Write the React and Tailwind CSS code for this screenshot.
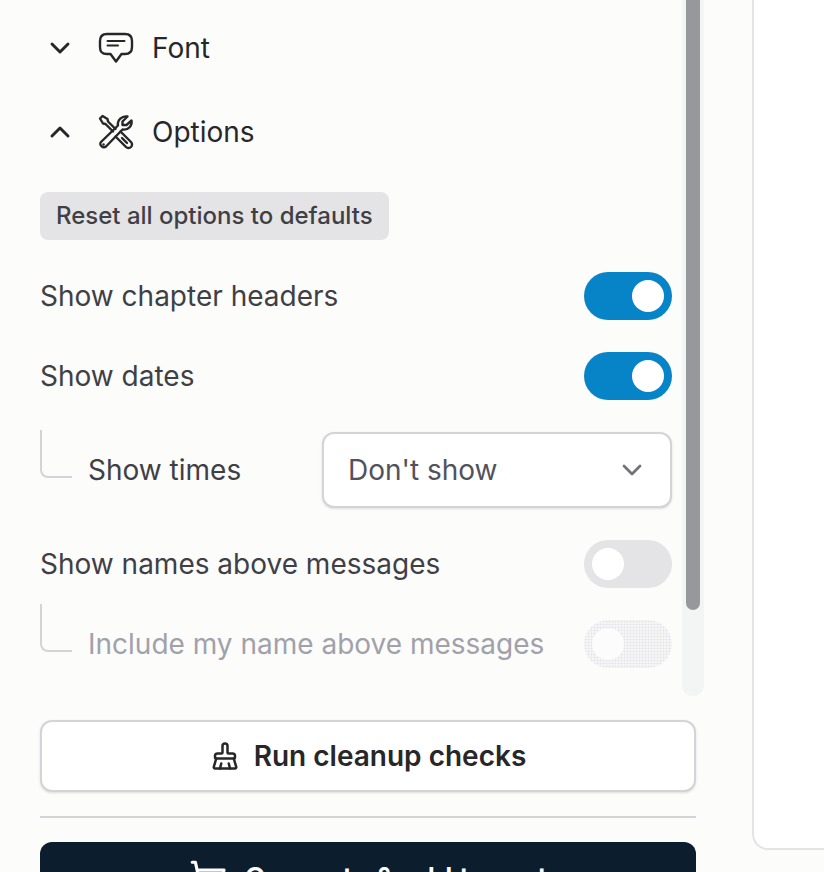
import React from "react";
import { ChevronDown, ChevronUp, BrushCleaning, ShoppingCart } from "lucide-react";

function Bubble() {
  return (
    <svg width="36" height="36" viewBox="0 0 36 36" fill="none" stroke="#27272a" strokeWidth="2.4" strokeLinecap="round" strokeLinejoin="round">
      <path d="M9 4H27C32 4 34 6 34 11V17C34 22 32 24 27 24H23.5L18 31.5L12.5 24H9C4 24 2 22 2 17V11C2 6 4 4 9 4Z" />
      <path d="M9.5 11H26.5" strokeWidth="2" />
      <path d="M9.5 15.5H20" strokeWidth="2" />
    </svg>
  );
}

function Tools() {
  return (
    <svg width="36" height="36" viewBox="0 0 36 36" fill="none" stroke="#27272a" strokeWidth="2.4" strokeLinecap="round" strokeLinejoin="round">
      <path d="M2 4.5L4.5 2L9.5 5L10 7.5L17.5 15M7.5 10L5 9.5L2 4.5M7.5 10L15 17.5" />
      <path d="M22.5 17.5L33 28A3.5 3.5 0 0 1 28 33L17.5 22.5" />
      <path d="M24 24L29 29" />
      <path d="M29.5 2.5L24.5 7.5V11H28.5L33.5 6.5C34.5 11.5 30.5 16.5 24.5 15.5L8 32.5C5 35 0.5 30.5 3 28L20 11.5C19 6 24 1.5 29.5 2.5Z" />
      <path d="M5.5 30.5H5.6" />
    </svg>
  );
}

function Section({ open, icon, label }) {
  const Chevron = open ? ChevronUp : ChevronDown;
  return (
    <div className="flex h-12 items-center text-[#27272a]">
      <div className="flex w-[58px] justify-start pl-[4px]">
        <Chevron size={32} strokeWidth={2.2} />
      </div>
      <div className="flex w-[54px]">{icon}</div>
      <span className="text-[28px]">{label}</span>
    </div>
  );
}

function Toggle({ on, disabled }) {
  const track = disabled
    ? "bg-[radial-gradient(#e6e6e9_45%,#f6f6f6_50%)] bg-[length:3px_3px]"
    : on
      ? "justify-end bg-[#0784c7]"
      : "bg-[#e4e4e7]";
  return (
    <div className={`flex h-12 w-[88px] shrink-0 items-center rounded-full px-2 ${track}`}>
      <div className={`h-8 w-8 rounded-full ${disabled ? "bg-[#fcfcfc]" : "bg-white"}`} />
    </div>
  );
}

function Row({ label, on }) {
  return (
    <div className="flex h-12 items-center justify-between">
      <span className="text-[28px] text-[#3f3f46]">{label}</span>
      <Toggle on={on} />
    </div>
  );
}

function Connector() {
  return <div className="h-12 w-8 shrink-0 rounded-bl-lg border-b-2 border-l-2 border-[#d4d4d8]" />;
}

export default function App() {
  return (
    <div className="flex h-[872px] w-[824px] overflow-hidden bg-[#fcfcfb] font-['Inter',sans-serif]">
      <div className="flex w-[752px] shrink-0 flex-col pl-10 pr-14">
        <div className="relative h-[696px] shrink-0">
          <div className="flex w-[632px] flex-col pt-6">
            <Section icon={<Bubble />} label="Font" />
            <div className="mt-9">
              <Section open icon={<Tools />} label="Options" />
            </div>
            <button className="mt-9 h-12 w-fit rounded-lg bg-[#e4e4e7] px-4 text-[24px] font-medium text-[#3f3f46]">
              Reset all options to defaults
            </button>
            <div className="mt-8 flex flex-col gap-8">
              <Row label="Show chapter headers" on />
              <Row label="Show dates" on />
              <div className="flex h-[76px] items-center justify-between">
                <div className="flex items-center">
                  <div className="mb-[32px]"><Connector /></div>
                  <span className="ml-4 text-[28px] text-[#3f3f46]">Show times</span>
                </div>
                <div className="flex h-[76px] w-[350px] items-center justify-between rounded-xl border-2 border-[#d4d4d8] bg-white pl-6 pr-[22px] shadow-sm">
                  <span className="text-[28px] text-[#52525b]">Don't show</span>
                  <ChevronDown size={32} strokeWidth={2} className="text-[#71717a]" />
                </div>
              </div>
              <Row label="Show names above messages" />
              <div className="flex h-12 items-center justify-between">
                <div className="flex items-center">
                  <div className="mb-[32px]"><Connector /></div>
                  <span className="ml-4 text-[28px] text-[#a1a1aa]">Include my name above messages</span>
                </div>
                <Toggle disabled />
              </div>
            </div>
          </div>
          <div className="absolute left-[642px] top-0 h-[696px] w-[22px] rounded-b-xl bg-[#f3f4f4] px-1">
            <div className="h-[610px] w-3.5 rounded-b-lg bg-[#97989c]" />
          </div>
        </div>
        <button className="mt-6 flex h-[72px] shrink-0 items-center justify-center gap-[14px] rounded-xl border-2 border-[#d4d4d8] bg-white text-[28px] font-semibold text-[#27272a] shadow-sm">
          <BrushCleaning size={30} strokeWidth={2} />
          Run cleanup checks
        </button>
        <div className="mt-6 h-0.5 shrink-0 bg-[#d4d4d8]" />
        <button className="mt-6 flex h-[72px] shrink-0 items-center justify-center gap-[18px] rounded-xl bg-[#0c1e2e] text-[28px] font-semibold text-white">
          <ShoppingCart size={38} strokeWidth={2} />
          Generate &amp; add to cart
        </button>
      </div>
      <div className="h-[850px] flex-1 rounded-bl-2xl border-b-2 border-l-2 border-[#e4e4e7] bg-white" />
    </div>
  );
}
